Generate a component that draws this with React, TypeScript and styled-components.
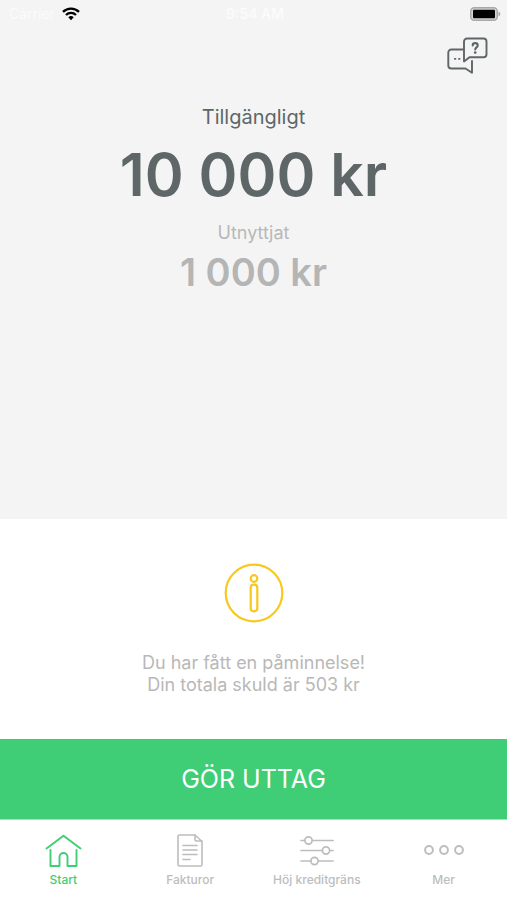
import React from "react";
import styled, { createGlobalStyle } from "styled-components";

const GlobalStyle = createGlobalStyle`
  *, *::before, *::after { box-sizing: border-box; }
  html, body { margin: 0; padding: 0; }
  body { background: #ffffff; font-family: Inter, "Liberation Sans", sans-serif; }
`;

const Screen = styled.div`
  display: flex;
  flex-direction: column;
  min-height: 100vh;
`;

const Overview = styled.main`
  flex: 1;
  display: flex;
  flex-direction: column;
  background: #f4f4f4;
`;

const StatusBar = styled.header`
  display: grid;
  grid-template-columns: 1fr auto 1fr;
  align-items: center;
  height: 28px;
  padding: 0 6px 0 9px;
  color: #fbfbfb;
  font-size: 14px;
  line-height: 20px;
`;

const Carrier = styled.div`
  display: flex;
  align-items: center;
  gap: 7px;
`;

const Clock = styled.time`
  font-weight: 600;
`;

const BatterySlot = styled.div`
  display: flex;
  justify-content: flex-end;
`;

const Toolbar = styled.div`
  display: flex;
  justify-content: flex-end;
  padding: 8px 19px 0;
`;

const ChatButton = styled.button`
  display: flex;
  padding: 0;
  border: 0;
  background: none;
  color: #5f6668;
  cursor: pointer;
`;

const Balances = styled.dl`
  display: flex;
  flex-direction: column;
  align-items: center;
  margin: 0;
  padding-top: 31px;
  text-align: center;
`;

const BalanceLabel = styled.dt<{ $muted?: boolean }>`
  color: ${(p) => (p.$muted ? "#b8b8b8" : "#5f6668")};
  font-size: ${(p) => (p.$muted ? 18 : 20)}px;
  line-height: 24px;
`;

const BalanceAmount = styled.dd<{ $muted?: boolean }>`
  margin: 0;
  color: ${(p) => (p.$muted ? "#b5b5b5" : "#5f6668")};
  font-size: ${(p) => (p.$muted ? 38 : 59)}px;
  font-weight: 600;
  line-height: ${(p) => (p.$muted ? 54 : 92)}px;
`;

const Notice = styled.section`
  display: flex;
  flex-direction: column;
  align-items: center;
  gap: 29px;
  padding: 44px 16px 43px;
  color: #b8b8b8;
  text-align: center;
`;

const NoticeText = styled.p`
  margin: 0;
  font-size: 18px;
  line-height: 22px;
`;

const WithdrawButton = styled.button`
  height: 80px;
  border: 0;
  background: #3fcd75;
  color: #ffffff;
  font-family: inherit;
  font-size: 25px;
  line-height: 32px;
  cursor: pointer;
`;

const TabBar = styled.nav`
  display: grid;
  grid-template-columns: repeat(4, 1fr);
  padding: 12px 0 11px;
  border-top: 1px solid #c4cfc8;
`;

const Tab = styled.a<{ $active?: boolean }>`
  display: flex;
  flex-direction: column;
  align-items: center;
  gap: 1px;
  color: ${(p) => (p.$active ? "#3fcd75" : "#bdbdbd")};
  font-size: 12px;
  font-weight: 500;
  line-height: 18px;
  text-decoration: none;
  white-space: nowrap;
`;

const WifiIcon = () => (
  <svg width="18" height="14" viewBox="0 0 18 14" fill="none" stroke="#000" strokeWidth="2.3" aria-label="Wi-Fi">
    <path d="M1 4.900a11.300 11.300 0 0 1 16 0" />
    <path d="M4 8a7 7 0 0 1 10 0" />
    <path d="M6.300 10.300a3.800 3.800 0 0 1 5.400 0L9 13.200z" fill="#000" stroke="none" />
  </svg>
);

const BatteryIcon = () => (
  <svg width="31" height="14" viewBox="0 0 31 14" aria-label="Batteri">
    <rect x="0.75" y="0.75" width="26.500" height="12.500" rx="3.500" fill="#d4d4d4" stroke="#a9a9a9" strokeWidth="1.500" />
    <rect x="3" y="2.800" width="22" height="8.400" rx="1" fill="#000" />
    <path d="M28.500 4.500c1.200.5 1.800 1.400 1.800 2.500s-.6 2-1.800 2.500z" fill="#a9a9a9" />
  </svg>
);

const ChatIcon = () => (
  <svg width="41" height="38" viewBox="0 0 41 38" fill="none" stroke="currentColor" strokeWidth="1.900" strokeLinejoin="round" strokeLinecap="round">
    <path d="M20 2.500h16.500a3 3 0 0 1 3 3v12.800a3 3 0 0 1-3 3H22.500L17 25.500V5.500a3 3 0 0 1 3-3z" />
    <path d="M16.500 13.500H4.300a3 3 0 0 0-3 3v13a3 3 0 0 0 3 3h14.200l6.500 4.200V25" />
    <path d="M25.700 9.400c0-3 5-3 5 0 0 2-2.500 1.800-2.500 4" strokeWidth="2.100" />
    <circle cx="28.200" cy="16.600" r="1.300" fill="currentColor" stroke="none" />
    <path d="M7.700 22.800h.8M11.900 22.800h.8" strokeWidth="1.700" />
  </svg>
);

const InfoIcon = () => (
  <svg width="60" height="60" viewBox="0 0 60 60" fill="none" stroke="#f8c81c" strokeWidth="2.200" aria-hidden="true">
    <circle cx="30" cy="30" r="28.300" />
    <circle cx="30" cy="15.500" r="3.300" />
    <rect x="26.700" y="21.700" width="6.600" height="26.600" rx="3" />
  </svg>
);

const HomeIcon = () => (
  <svg width="40" height="38" viewBox="0 0 40 38" fill="none" stroke="currentColor" strokeWidth="1.900" strokeLinecap="round" strokeLinejoin="round">
    <path d="M3.500 16.500 20.500 3.800l17 12.700" />
    <path d="M7.500 18v16h9V25a4 4 0 0 1 8 0v9h9V18" />
  </svg>
);

const InvoiceIcon = () => (
  <svg width="40" height="38" viewBox="0 0 40 38" fill="none" stroke="currentColor" strokeWidth="1.600" strokeLinecap="round" strokeLinejoin="round">
    <path d="M25 3H9.500a1.500 1.500 0 0 0-1.500 1.500v28A1.500 1.500 0 0 0 9.500 34h21a1.500 1.500 0 0 0 1.500-1.500V9.500z" />
    <path d="M25 3v4.500a1.500 1.500 0 0 0 1.500 1.500H32" />
    <path d="M13 13.500h14M13 18h14M13 22.500h14M13 27.500h7" />
  </svg>
);

const SlidersIcon = () => (
  <svg width="40" height="38" viewBox="0 0 40 38" fill="none" stroke="currentColor" strokeWidth="1.700" strokeLinecap="round">
    <path d="M4 8.500h3.700M15.300 8.500H36M4 18.500h21.200M32.800 18.500H36M4 29h9.700M21.300 29H36" />
    <circle cx="11.500" cy="8.500" r="3.600" />
    <circle cx="29" cy="18.500" r="3.600" />
    <circle cx="17.500" cy="29" r="3.600" />
  </svg>
);

const MoreIcon = () => (
  <svg width="40" height="38" viewBox="0 0 40 38" fill="none" stroke="currentColor" strokeWidth="2">
    <circle cx="5" cy="18" r="3.900" />
    <circle cx="20" cy="18" r="3.900" />
    <circle cx="35" cy="18" r="3.900" />
  </svg>
);

const tabs = [
  { id: "start", label: "Start", Icon: HomeIcon },
  { id: "fakturor", label: "Fakturor", Icon: InvoiceIcon },
  { id: "kreditgrans", label: "Höj kreditgräns", Icon: SlidersIcon },
  { id: "mer", label: "Mer", Icon: MoreIcon },
];

export default function App() {
  const [active, setActive] = React.useState("start");

  return (
    <Screen>
      <GlobalStyle />
      <Overview>
        <StatusBar>
          <Carrier>
            Carrier
            <WifiIcon />
          </Carrier>
          <Clock>9:54 AM</Clock>
          <BatterySlot>
            <BatteryIcon />
          </BatterySlot>
        </StatusBar>
        <Toolbar>
          <ChatButton type="button" aria-label="Kundtjänst">
            <ChatIcon />
          </ChatButton>
        </Toolbar>
        <Balances>
          <BalanceLabel>Tillgängligt</BalanceLabel>
          <BalanceAmount>10 000 kr</BalanceAmount>
          <BalanceLabel $muted>Utnyttjat</BalanceLabel>
          <BalanceAmount $muted>1 000 kr</BalanceAmount>
        </Balances>
      </Overview>
      <Notice>
        <InfoIcon />
        <NoticeText>
          Du har fått en påminnelse!
          <br />
          Din totala skuld är 503 kr
        </NoticeText>
      </Notice>
      <WithdrawButton type="button">GÖR UTTAG</WithdrawButton>
      <TabBar>
        {tabs.map(({ id, label, Icon }) => (
          <Tab key={id} href={`#${id}`} $active={active === id} onClick={() => setActive(id)}>
            <Icon />
            {label}
          </Tab>
        ))}
      </TabBar>
    </Screen>
  );
}
